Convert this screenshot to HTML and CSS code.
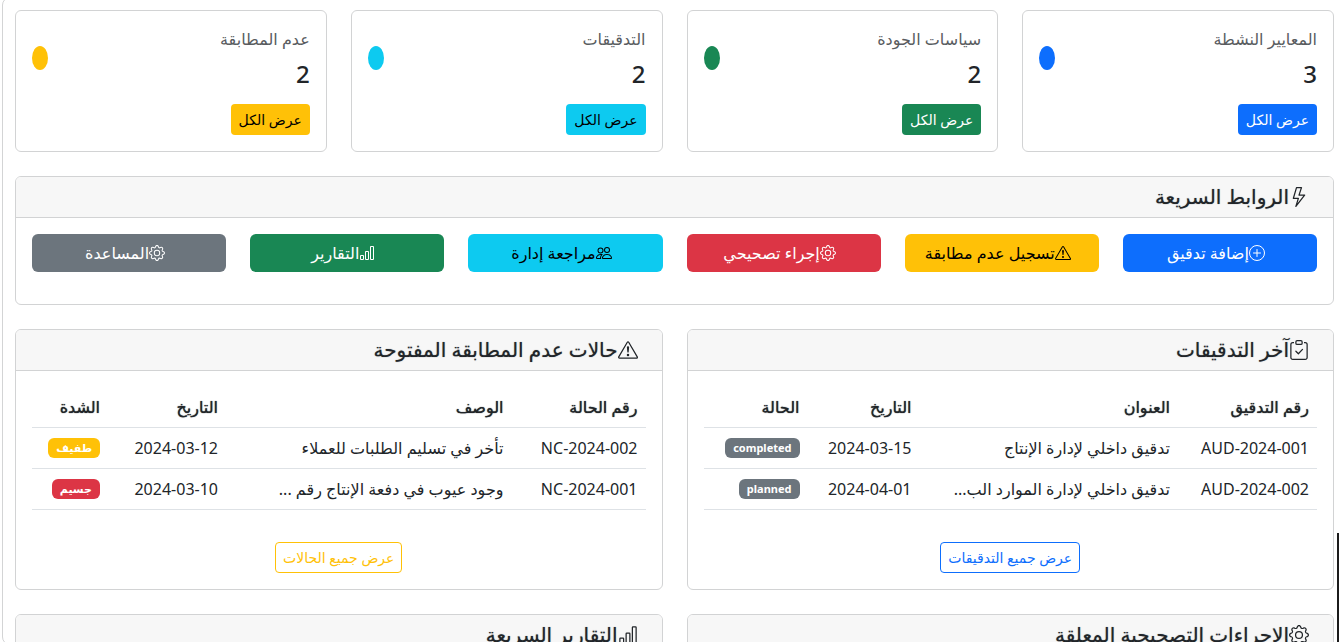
FILE: index.html
```html
<!DOCTYPE html>
<html lang="ar" dir="rtl">
<head>
<meta charset="utf-8">
<meta name="viewport" content="width=device-width, initial-scale=1">
<title>لوحة إدارة الجودة</title>
<link rel="stylesheet" href="styles.css">
</head>
<body>
<svg class="sprite" aria-hidden="true">
  <symbol id="lightning" viewBox="0 0 16 16"><path d="M5.52.359A.5.5 0 0 1 6 0h4a.5.5 0 0 1 .474.658L8.694 6H12.5a.5.5 0 0 1 .395.807l-7 9a.5.5 0 0 1-.873-.454L6.823 9.5H3.5a.5.5 0 0 1-.48-.641l2.5-8.5zM6.374 1 4.168 8.5H7.5a.5.5 0 0 1 .478.647L6.78 13.04 11.478 7H8a.5.5 0 0 1-.474-.658L9.306 1H6.374z"/></symbol>
  <symbol id="plus" viewBox="0 0 16 16"><g fill="none" stroke="currentColor"><circle cx="8" cy="8" r="7.5"/><path stroke-linecap="round" d="M8 4.500v7M4.500 8h7"/></g></symbol>
  <symbol id="warning" viewBox="0 0 16 16"><path d="M7.938 2.016A.13.13 0 0 1 8.002 2a.13.13 0 0 1 .063.016.146.146 0 0 1 .054.057l6.857 11.667c.036.06.035.124.002.183a.163.163 0 0 1-.054.06.116.116 0 0 1-.066.017H1.146a.115.115 0 0 1-.066-.017.163.163 0 0 1-.054-.06.176.176 0 0 1 .002-.183L7.884 2.073a.147.147 0 0 1 .054-.057zm1.044-.45a1.13 1.13 0 0 0-1.96 0L.165 13.233c-.457.778.091 1.767.98 1.767h13.713c.889 0 1.438-.99.98-1.767L8.982 1.566z"/><path d="M7.002 12a1 1 0 1 1 2 0 1 1 0 0 1-2 0zM7.1 5.995a.905.905 0 1 1 1.8 0l-.35 3.507a.552.552 0 0 1-1.1 0L7.1 5.995z"/></symbol>
  <symbol id="gear" viewBox="0 0 16 16"><path d="M8 4.754a3.246 3.246 0 1 0 0 6.492 3.246 3.246 0 0 0 0-6.492zM5.754 8a2.246 2.246 0 1 1 4.492 0 2.246 2.246 0 0 1-4.492 0z"/><path d="M9.796 1.343c-.527-1.79-3.065-1.79-3.592 0l-.094.319a.873.873 0 0 1-1.255.52l-.292-.16c-1.64-.892-3.433.902-2.54 2.541l.159.292a.873.873 0 0 1-.52 1.255l-.319.094c-1.79.527-1.79 3.065 0 3.592l.319.094a.873.873 0 0 1 .52 1.255l-.16.292c-.892 1.64.901 3.434 2.541 2.54l.292-.159a.873.873 0 0 1 1.255.52l.094.319c.527 1.79 3.065 1.79 3.592 0l.094-.319a.873.873 0 0 1 1.255-.52l.292.16c1.64.893 3.434-.902 2.54-2.541l-.159-.292a.873.873 0 0 1 .52-1.255l.319-.094c1.79-.527 1.79-3.065 0-3.592l-.319-.094a.873.873 0 0 1-.52-1.255l.16-.292c.893-1.64-.902-3.433-2.541-2.54l-.292.159a.873.873 0 0 1-1.255-.52l-.094-.319zm-2.633.283c.246-.835 1.428-.835 1.674 0l.094.319a1.873 1.873 0 0 0 2.693 1.115l.291-.16c.764-.415 1.6.42 1.184 1.185l-.159.292a1.873 1.873 0 0 0 1.116 2.692l.318.094c.835.246.835 1.428 0 1.674l-.319.094a1.873 1.873 0 0 0-1.115 2.693l.16.291c.415.764-.42 1.6-1.185 1.184l-.291-.159a1.873 1.873 0 0 0-2.693 1.116l-.094.318c-.246.835-1.428.835-1.674 0l-.094-.319a1.873 1.873 0 0 0-2.692-1.115l-.292.16c-.764.415-1.6-.42-1.184-1.185l.159-.291A1.873 1.873 0 0 0 1.945 8.93l-.319-.094c-.835-.246-.835-1.428 0-1.674l.319-.094A1.873 1.873 0 0 0 3.06 4.377l-.16-.292c-.415-.764.42-1.6 1.185-1.184l.292.159a1.873 1.873 0 0 0 2.692-1.115l.094-.319z"/></symbol>
  <symbol id="people" viewBox="0 0 16 16"><path d="M15 14s1 0 1-1-1-4-5-4-5 3-5 4 1 1 1 1h8zm-7.978-1A.261.261 0 0 1 7 12.996c.001-.264.167-1.03.76-1.72C8.312 10.629 9.282 10 11 10c1.717 0 2.687.63 3.24 1.276.593.69.758 1.457.76 1.72l-.008.002a.274.274 0 0 1-.014.002H7.022zM11 7a2 2 0 1 0 0-4 2 2 0 0 0 0 4zm3-2a3 3 0 1 1-6 0 3 3 0 0 1 6 0zM6.936 9.28a5.88 5.88 0 0 0-1.23-.247A7.35 7.35 0 0 0 5 9c-4 0-5 3-5 4 0 .667.333 1 1 1h4.216A2.238 2.238 0 0 1 5 13c0-1.01.377-2.042 1.09-2.904.243-.294.526-.569.846-.816zM4.92 10A5.493 5.493 0 0 0 4 13H1c0-.26.164-1.03.76-1.724.545-.636 1.492-1.256 3.16-1.275zM1.500 5.500a3 3 0 1 1 6 0 3 3 0 0 1-6 0zm3-2a2 2 0 1 0 0 4 2 2 0 0 0 0-4z"/></symbol>
  <symbol id="bars" viewBox="0 0 16 16"><path d="M4 11H2v3h2v-3zm5-4H7v7h2V7zm5-5v12h-2V2h2zm-2-1a1 1 0 0 0-1 1v12a1 1 0 0 0 1 1h2a1 1 0 0 0 1-1V2a1 1 0 0 0-1-1h-2zM6 7a1 1 0 0 1 1-1h2a1 1 0 0 1 1 1v7a1 1 0 0 1-1 1H7a1 1 0 0 1-1-1V7zm-5 4a1 1 0 0 1 1-1h2a1 1 0 0 1 1 1v3a1 1 0 0 1-1 1H2a1 1 0 0 1-1-1v-3z"/></symbol>
  <symbol id="clipboard" viewBox="0 0 16 16"><g fill="none" stroke="currentColor"><path d="M4 2H3a1.500 1.500 0 0 0-1.500 1.500V14A1.500 1.500 0 0 0 3 15.500h10a1.500 1.500 0 0 0 1.500-1.500V3.500A1.500 1.500 0 0 0 13 2h-1"/><rect x="5.500" y=".5" width="5" height="3" rx="1"/><path stroke-linecap="round" stroke-linejoin="round" d="M5.500 9 7.500 11 10.800 7.500"/></g></symbol>
</svg>

<main class="panel">
  <section class="stats">
    <article class="card stat">
      <div class="stat-row"><div><h6 class="stat-title">المعايير النشطة</h6><p class="stat-value">3</p></div><span class="dot blue"></span></div>
      <a class="btn btn-sm blue" href="#">عرض الكل</a>
    </article>
    <article class="card stat">
      <div class="stat-row"><div><h6 class="stat-title">سياسات الجودة</h6><p class="stat-value">2</p></div><span class="dot green"></span></div>
      <a class="btn btn-sm green" href="#">عرض الكل</a>
    </article>
    <article class="card stat">
      <div class="stat-row"><div><h6 class="stat-title">التدقيقات</h6><p class="stat-value">2</p></div><span class="dot cyan"></span></div>
      <a class="btn btn-sm cyan" href="#">عرض الكل</a>
    </article>
    <article class="card stat">
      <div class="stat-row"><div><h6 class="stat-title">عدم المطابقة</h6><p class="stat-value">2</p></div><span class="dot yellow"></span></div>
      <a class="btn btn-sm yellow" href="#">عرض الكل</a>
    </article>
  </section>

  <section class="card">
    <h5 class="card-header"><svg class="icon"><use href="#lightning"/></svg>الروابط السريعة</h5>
    <nav class="card-body links">
      <a class="btn blue" href="#"><svg class="icon"><use href="#plus"/></svg>إضافة تدقيق</a>
      <a class="btn yellow" href="#"><svg class="icon"><use href="#warning"/></svg>تسجيل عدم مطابقة</a>
      <a class="btn red" href="#"><svg class="icon"><use href="#gear"/></svg>إجراء تصحيحي</a>
      <a class="btn cyan" href="#"><svg class="icon"><use href="#people"/></svg>مراجعة إدارة</a>
      <a class="btn green" href="#"><svg class="icon"><use href="#bars"/></svg>التقارير</a>
      <a class="btn gray" href="#"><svg class="icon"><use href="#gear"/></svg>المساعدة</a>
    </nav>
  </section>

  <div class="halves">
    <section class="card">
      <h5 class="card-header"><svg class="icon"><use href="#clipboard"/></svg>آخر التدقيقات</h5>
      <div class="card-body">
        <table class="table audits">
          <colgroup><col class="col-id"><col><col class="col-date"><col class="col-state"></colgroup>
          <thead><tr><th>رقم التدقيق</th><th>العنوان</th><th>التاريخ</th><th>الحالة</th></tr></thead>
          <tbody>
            <tr><td>AUD-2024-001</td><td>تدقيق داخلي لإدارة الإنتاج</td><td>2024-03-15</td><td><span class="badge gray">completed</span></td></tr>
            <tr><td>AUD-2024-002</td><td>تدقيق داخلي لإدارة الموارد الب...</td><td>2024-04-01</td><td><span class="badge gray">planned</span></td></tr>
          </tbody>
        </table>
        <div class="more"><a class="btn btn-sm outline-blue" href="#">عرض جميع التدقيقات</a></div>
      </div>
    </section>
    <section class="card">
      <h5 class="card-header"><svg class="icon"><use href="#warning"/></svg>حالات عدم المطابقة المفتوحة</h5>
      <div class="card-body">
        <table class="table cases">
          <colgroup><col class="col-id"><col><col class="col-date"><col class="col-state"></colgroup>
          <thead><tr><th>رقم الحالة</th><th>الوصف</th><th>التاريخ</th><th>الشدة</th></tr></thead>
          <tbody>
            <tr><td>NC-2024-002</td><td>تأخر في تسليم الطلبات للعملاء</td><td>2024-03-12</td><td><span class="badge yellow">طفيف</span></td></tr>
            <tr><td>NC-2024-001</td><td>وجود عيوب في دفعة الإنتاج رقم ...</td><td>2024-03-10</td><td><span class="badge red">جسيم</span></td></tr>
          </tbody>
        </table>
        <div class="more"><a class="btn btn-sm outline-yellow" href="#">عرض جميع الحالات</a></div>
      </div>
    </section>
    <section class="card">
      <h5 class="card-header"><svg class="icon"><use href="#gear"/></svg>الإجراءات التصحيحية المعلقة</h5>
    </section>
    <section class="card">
      <h5 class="card-header"><svg class="icon"><use href="#bars"/></svg>التقارير السريعة</h5>
    </section>
  </div>
</main>
<div class="scroll-thumb"></div>
</body>
</html>
```

FILE: styles.css
```css
* { box-sizing: border-box; }

html { overflow: hidden; }

body {
  margin: 0;
  padding-left: 2px;
  height: 100vh;
  overflow: hidden;
  background: #fff;
  color: #212529;
  font: 16px/24px "Noto Sans", "DejaVu Sans", sans-serif;
}

h5, h6, p { margin: 0; }

.sprite { display: none; }

.icon {
  width: 1em;
  height: 1em;
  flex: none;
  margin-right: 8px;
  fill: currentColor;
}

.panel {
  display: flex;
  flex-direction: column;
  gap: 24px;
  height: calc(100vh + 6px);
  margin: -3px -8px 0 0;
  padding: 12px;
  border: 1px solid #d3d4d5;
  border-radius: 8px;
  overflow: hidden;
}

.panel > * { flex: none; }

.stats {
  display: grid;
  grid-template-columns: repeat(4, 1fr);
  gap: 24px;
}

.halves {
  display: grid;
  grid-template-columns: repeat(2, minmax(0, 1fr));
  gap: 24px;
}

.card {
  border: 1px solid #d2d3d4;
  border-radius: 6px;
  background: #fff;
  overflow: hidden;
}

.stat { padding: 16px; }

.stat-row {
  display: flex;
  align-items: center;
  justify-content: space-between;
  margin-bottom: 16px;
}

.stat-title {
  margin-bottom: 8px;
  font-size: 16px;
  font-weight: 400;
  color: #595c5f;
}

.stat-value {
  font-size: 24px;
  font-weight: 500;
  line-height: 29px;
}

.dot {
  width: 16px;
  height: 24px;
  border-radius: 50%;
}

.card-header {
  display: flex;
  align-items: center;
  padding: 8px 16px;
  border-bottom: 1px solid #d2d3d4;
  background: #f7f7f7;
  font-size: 20px;
  font-weight: 500;
  text-shadow: 0 0 1px rgba(33, 37, 41, 0.6);
}

.card-body { padding: 16px; }

.links {
  display: grid;
  grid-template-columns: repeat(6, 1fr);
  gap: 24px;
  padding-bottom: 32px;
}

.btn {
  display: inline-flex;
  align-items: center;
  justify-content: center;
  padding: 6px 12px;
  border: 1px solid transparent;
  border-radius: 6px;
  text-decoration: none;
  white-space: nowrap;
}

.btn-sm {
  padding: 4px 7px;
  border-radius: 4px;
  font-size: 14px;
  line-height: 21px;
  vertical-align: top;
}

.blue { background: #0d6efd; color: #fff; }
.green { background: #198754; color: #fff; }
.red { background: #dc3545; color: #fff; }
.gray { background: #6c757d; color: #fff; }
.cyan { background: #0dcaf0; color: #000; }
.yellow { background: #ffc107; color: #000; }
.outline-blue { border-color: #0d6efd; color: #0d6efd; }
.outline-yellow { border-color: #ffc107; color: #ffc107; }

.table {
  width: 100%;
  margin-bottom: 32px;
  border-collapse: collapse;
  table-layout: fixed;
}

.table th,
.table td {
  padding: 8px;
  border-bottom: 1px solid #dee2e6;
  text-align: right;
  white-space: nowrap;
}

.table th {
  font-weight: 500;
  text-shadow: 0 0 1px #212529;
}

.audits .col-id { width: 139px; }
.audits .col-date { width: 112px; }
.audits .col-state { width: 104px; }
.cases .col-id { width: 134px; }
.cases .col-date { width: 118px; }
.cases .col-state { width: 76px; }

.badge {
  display: block;
  width: fit-content;
  margin: 2px 0;
  padding: 4px 8px;
  border-radius: 6px;
  color: #fff;
  font-size: 11px;
  font-weight: 700;
  line-height: 12px;
}

.more { text-align: center; }

.scroll-thumb {
  position: fixed;
  right: 0;
  bottom: 0;
  width: 2px;
  height: 17vh;
  background: #1b1b1b;
}
```
